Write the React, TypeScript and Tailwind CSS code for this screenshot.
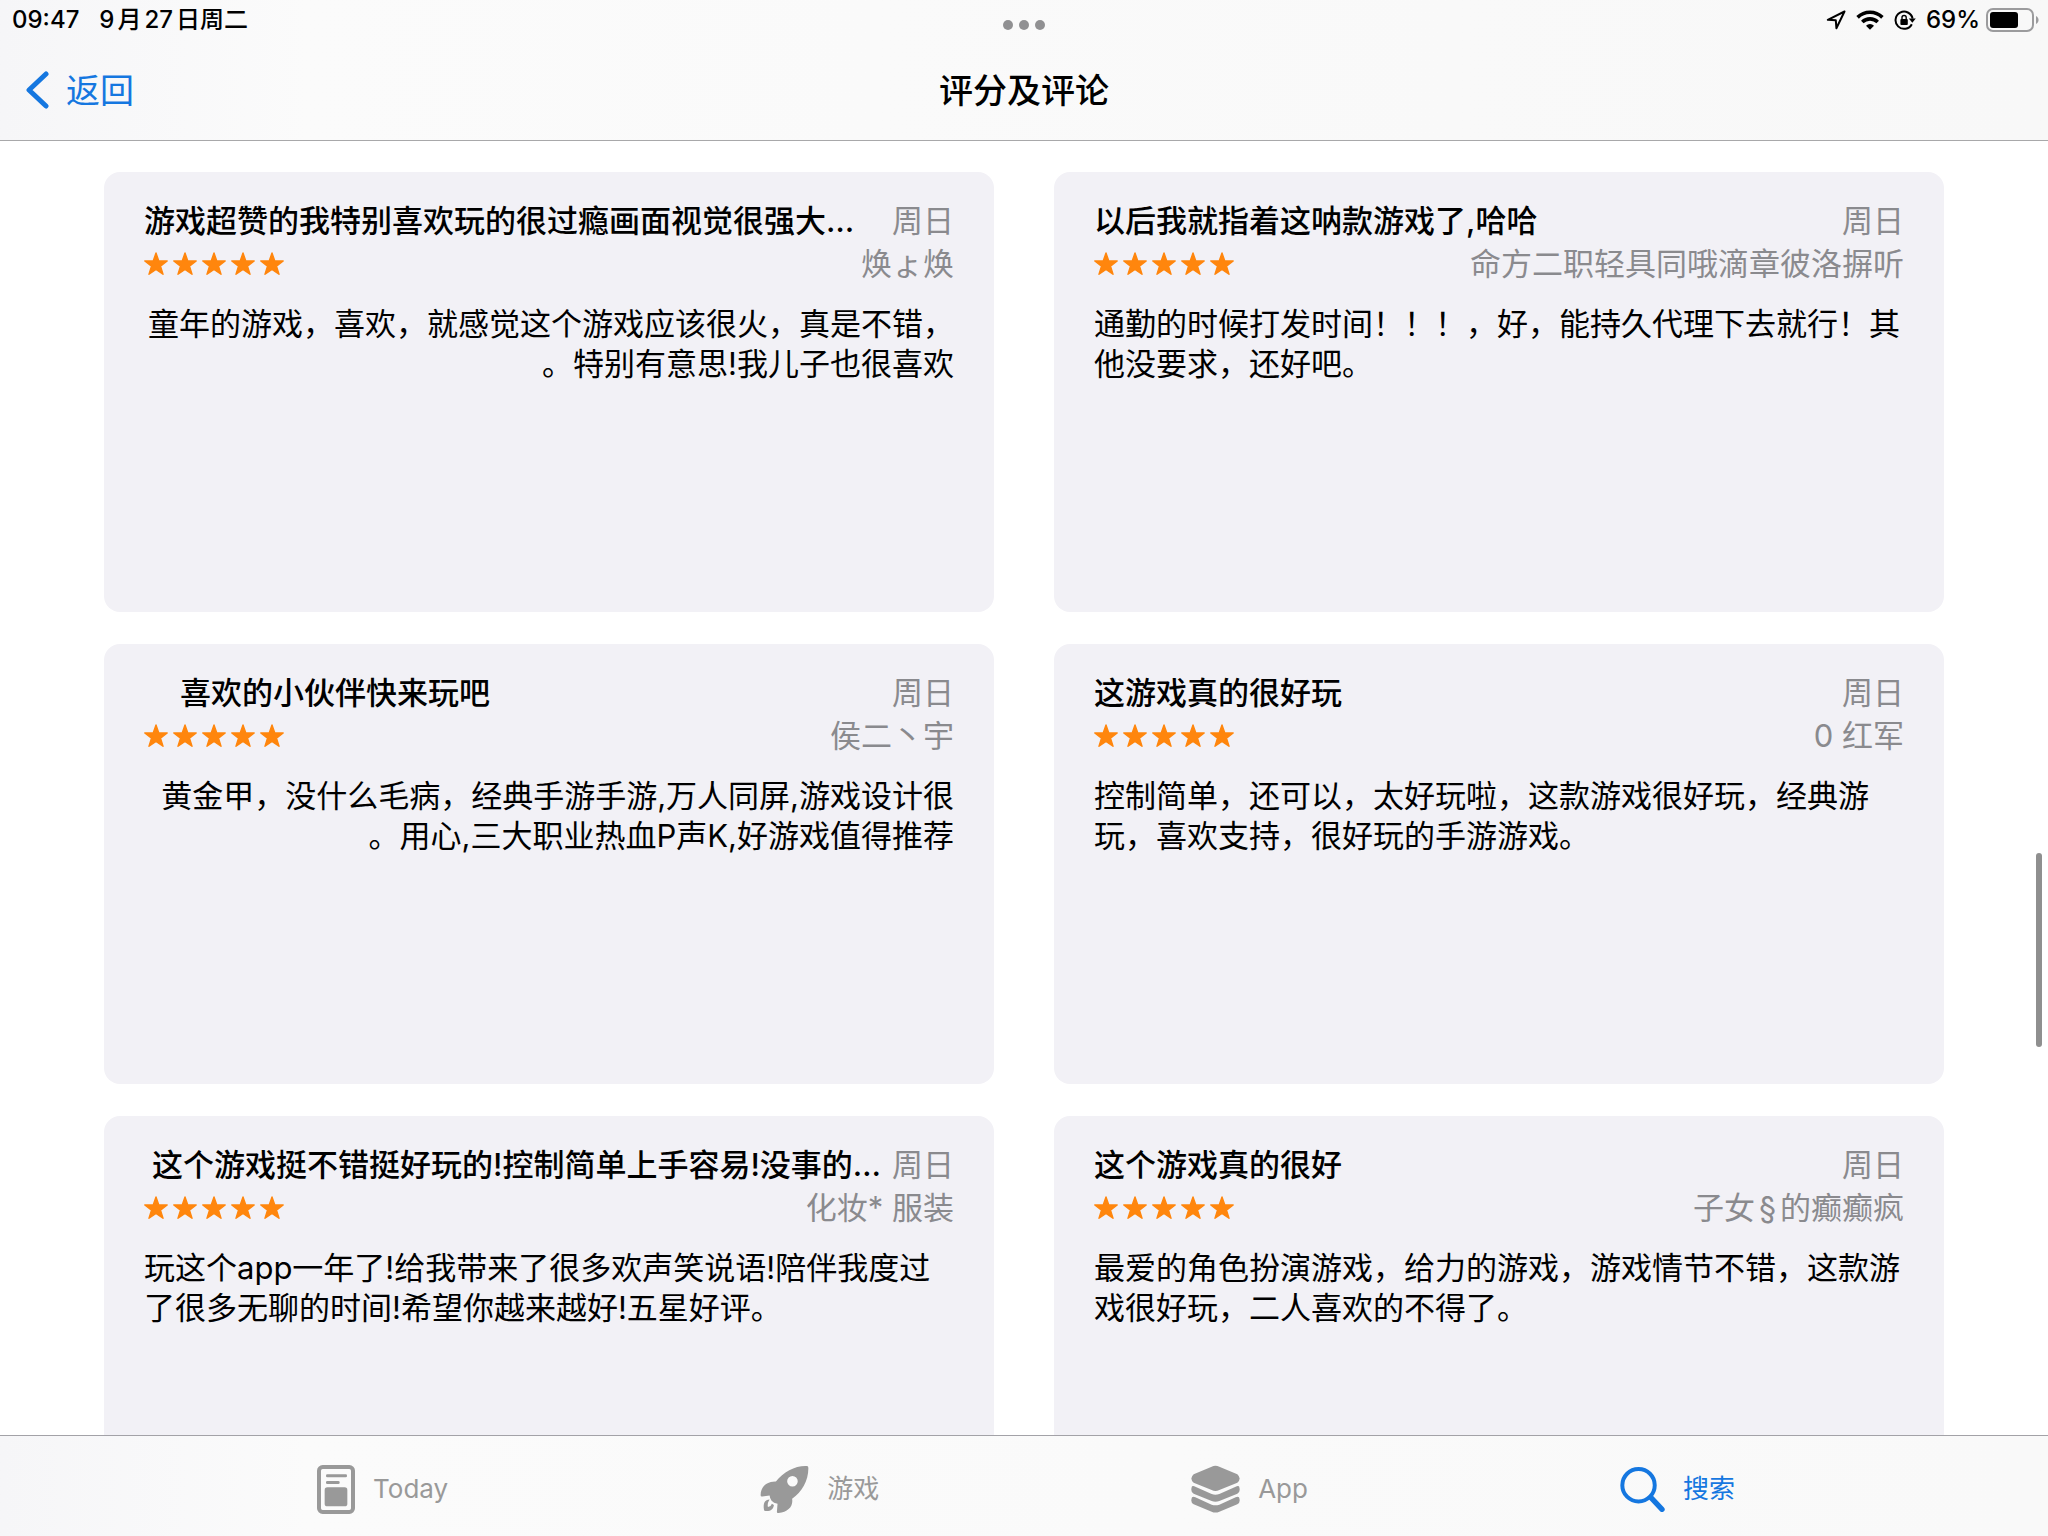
import React from "react";

type Review = {
  title: string;
  titlePad?: string;
  author: string;
  body: string;
  rtl?: boolean;
};

const reviews: Review[] = [
  {
    title: "游戏超赞的我特别喜欢玩的很过瘾画面视觉很强大…",
    author: "焕ょ焕",
    body: "童年的游戏，喜欢，就感觉这个游戏应该很火，真是不错，特别有意思!我儿子也很喜欢。",
    rtl: true,
  },
  {
    title: "以后我就指着这呐款游戏了,哈哈",
    author: "命方二职轻具同哦滴章彼洛摒听",
    body: "通勤的时候打发时间！！！，好，能持久代理下去就行！其他没要求，还好吧。",
  },
  {
    title: "喜欢的小伙伴快来玩吧",
    titlePad: "pl-9",
    author: "侯二丶宇",
    body: "黄金甲，没什么毛病，经典手游手游,万人同屏,游戏设计很用心,三大职业热血P声K,好游戏值得推荐。",
    rtl: true,
  },
  {
    title: "这游戏真的很好玩",
    author: "0 红军",
    body: "控制简单，还可以，太好玩啦，这款游戏很好玩，经典游玩，喜欢支持，很好玩的手游游戏。",
  },
  {
    title: "这个游戏挺不错挺好玩的!控制简单上手容易!没事的…",
    titlePad: "pl-2",
    author: "化妆* 服装",
    body: "玩这个app一年了!给我带来了很多欢声笑说语!陪伴我度过了很多无聊的时间!希望你越来越好!五星好评。",
  },
  {
    title: "这个游戏真的很好",
    author: "子女§的癫癫疯",
    body: "最爱的角色扮演游戏，给力的游戏，游戏情节不错，这款游戏很好玩，二人喜欢的不得了。",
  },
];

function Star() {
  return (
    <svg viewBox="0 0 24 24" className="size-6" fill="#ff860d" stroke="#ff860d" strokeWidth="1.4" strokeLinejoin="round">
      <path d="M12 1 14.8 9h8.4l-6.7 5.1 2.500 8.2L12 17.4l-7 4.9 2.500-8.200L.8 9h8.4z" />
    </svg>
  );
}

function Card({ review }: { review: Review }) {
  return (
    <article className="h-[440px] rounded-2xl bg-[#f2f1f6] px-10 pt-7">
      <div className="flex h-[42px] items-center justify-between gap-2 leading-[42px]">
        <h2 className={`min-w-0 overflow-hidden whitespace-nowrap font-medium ${review.titlePad ?? ""}`}>
          {review.title}
        </h2>
        <time className="shrink-0 text-[#8a8a8e]">周日</time>
      </div>
      <div className="flex h-11 items-center justify-between leading-11">
        <div className="flex gap-[5px]" role="img" aria-label="5 星">
          <Star />
          <Star />
          <Star />
          <Star />
          <Star />
        </div>
        <span className="text-[#8a8a8e] [text-autospace:normal]">{review.author}</span>
      </div>
      <p dir={review.rtl ? "rtl" : "ltr"} className="mt-[18px] leading-10">
        {review.body}
      </p>
    </article>
  );
}

function StatusIcons() {
  return (
    <div className="-mr-1 flex items-center">
      <svg viewBox="0 0 20 20" className="mr-2.5 size-5" fill="none" stroke="#000" strokeWidth="2" strokeLinejoin="round">
        <path d="M18.5 1.5 1.8 9.8l8 .5.6 8z" />
      </svg>
      <svg viewBox="0 0 28 20" className="mr-2.5 h-5 w-7" fill="none" stroke="#000" strokeWidth="3.6">
        <path d="M1.6 7.4a17.6 17.6 0 0 1 24.8 0" />
        <path d="M6.3 12a11 11 0 0 1 15.4 0" />
        <path d="M14 19.8l-4-4.1a5.8 5.8 0 0 1 8 0z" fill="#000" stroke="none" />
      </svg>
      <svg viewBox="0 0 22 20" className="mr-2.5 h-5 w-[22px]" fill="none" stroke="#000" strokeWidth="2">
        <path d="M17.8 14.2A8.6 8.6 0 1 1 18.6 8.6" />
        <path d="M14.8 8.4h7l-3.5 4.4z" fill="#000" stroke="none" />
        <rect x="6.4" y="9" width="7.4" height="6" rx="1" fill="#000" stroke="none" />
        <path d="M8 9.4V7.6a2.1 2.1 0 0 1 4.2 0v1.8" strokeWidth="1.4" />
      </svg>
      <span>69%</span>
      <svg viewBox="0 0 54 24" className="ml-1.5 h-6 w-[54px]">
        <rect x="1" y="1" width="46" height="22" rx="6" fill="none" stroke="#9b9b9d" strokeWidth="2" />
        <rect x="4" y="4" width="28" height="16" rx="3" fill="#000" />
        <path d="M50 8c3.4 1.400 3.4 6.600 0 8z" fill="#9b9b9d" />
      </svg>
    </div>
  );
}

function TodayIcon() {
  return (
    <svg viewBox="78 101 114 147" className="h-[49px] w-[38px]" fill="#999">
      <rect x="84" y="107" width="102" height="135" rx="11" fill="none" stroke="#999" strokeWidth="12" />
      <rect x="105" y="129" width="63" height="9" rx="4" />
      <rect x="105" y="149" width="41" height="9" rx="4" />
      <rect x="101" y="168" width="68" height="57" rx="8" />
    </svg>
  );
}

function RocketIcon() {
  return (
    <svg viewBox="57 101 148 148" className="size-[49px]" fill="#999">
      <path
        fillRule="evenodd"
        d="M199 104C165 102 128 121 105 151C77 150 58 168 59 193Q59 197 64 196L86 193Q87 203 92 209Q98 216 110 218L108 243Q108 247 113 246C142 243 158 226 154 203C184 182 204 148 203 109Q203 104 199 104ZM155 134a16 16 0 1 0 0 32a16 16 0 1 0 0-32Z"
      />
      <path d="M86 205C72 205 66 215 69 236Q69 240 74 240C89 241 97 236 99 222L93 218Q90 227 81 228Q78 218 86 205Z" />
    </svg>
  );
}

function StackIcon() {
  return (
    <svg viewBox="41 103 147 144" className="h-12 w-[49px]" fill="#999">
      <path d="M103 108Q114 103 126 108L180 131Q194 144 180 156L126 178Q114 184 103 178L49 156Q35 144 49 131Z" />
      <path d="M44 167Q48 165 54 168L103 190Q114 194 126 190L175 168Q181 165 185 167Q191 183 180 189L126 211Q114 216 103 211L49 189Q38 183 44 167Z" />
      <path d="M44 200Q48 197 54 200L103 222Q114 226 126 222L175 200Q181 197 185 200Q191 215 180 221L126 243Q114 248 103 243L49 221Q38 215 44 200Z" />
    </svg>
  );
}

function SearchIcon() {
  return (
    <svg viewBox="65 107 136 136" className="size-[45px]" fill="none" stroke="#1577e0" strokeLinecap="round">
      <circle cx="121" cy="162" r="49" strokeWidth="12" />
      <path d="M158 199 192 235" strokeWidth="16" />
    </svg>
  );
}

const tabs = [
  { label: "Today", icon: <TodayIcon />, style: "text-[#999999]" },
  { label: "游戏", icon: <RocketIcon />, style: "text-[#999999]" },
  { label: "App", icon: <StackIcon />, style: "text-[#999999]" },
  { label: "搜索", icon: <SearchIcon />, style: "text-[#1577e0]" },
];

export default function App() {
  return (
    <div
      className="flex h-screen flex-col overflow-hidden bg-white font-['Inter','Noto_Sans_CJK_SC',sans-serif] text-[31px] text-black [text-spacing-trim:space-all]"
      lang="zh-CN"
    >
      <header className="border-b border-[#a8a8aa] bg-linear-to-r from-[#f6f6f8] via-[#fbfbfb] via-15% to-[#f8f8f8]">
        <div className="grid h-10 grid-cols-[1fr_auto_1fr] items-center px-3 text-2xl font-medium">
          <div className="flex gap-5">
            <span>09:47</span>
            <span className="[text-autospace:normal]">9月27日周二</span>
          </div>
          <div className="flex gap-1.5 pt-2.5">
            <i className="size-2.5 rounded-full bg-[#909092]" />
            <i className="size-2.5 rounded-full bg-[#909092]" />
            <i className="size-2.5 rounded-full bg-[#909092]" />
          </div>
          <div className="flex justify-end">
            <StatusIcons />
          </div>
        </div>
        <div className="grid h-[100px] grid-cols-[1fr_auto_1fr] items-center px-6 text-[34px]">
          <button className="flex items-center gap-4 justify-self-start text-[#1577e0]">
            <svg viewBox="0 0 26 38" className="h-[38px] w-[26px]" fill="none" stroke="currentColor" strokeWidth="5" strokeLinecap="round" strokeLinejoin="round">
              <path d="M22 3 5 19l17 16" />
            </svg>
            返回
          </button>
          <h1 className="font-medium">评分及评论</h1>
        </div>
      </header>

      <main className="relative min-h-0 flex-1 overflow-hidden">
        <div className="grid grid-cols-2 gap-x-[60px] gap-y-8 px-[104px] pt-[31px]">
          {reviews.map((r) => (
            <Card key={r.author} review={r} />
          ))}
        </div>
        <div className="absolute right-1.5 top-[712px] h-[194px] w-1.5 rounded-full bg-[#8f8f8f]" />
      </main>

      <nav className="flex h-[101px] shrink-0 items-center justify-center gap-[312px] border-t border-[#a3a2a7] bg-linear-to-r from-[#f6f6f8] via-[#fbfbfb] via-15% to-[#f9f9f9] pl-1 pt-1.5 text-[26px]">
        {tabs.map((t) => (
          <button key={t.label} className={`flex items-center gap-[18px] whitespace-nowrap leading-10 ${t.style}`}>
            {t.icon}
            <span>{t.label}</span>
          </button>
        ))}
      </nav>
    </div>
  );
}
